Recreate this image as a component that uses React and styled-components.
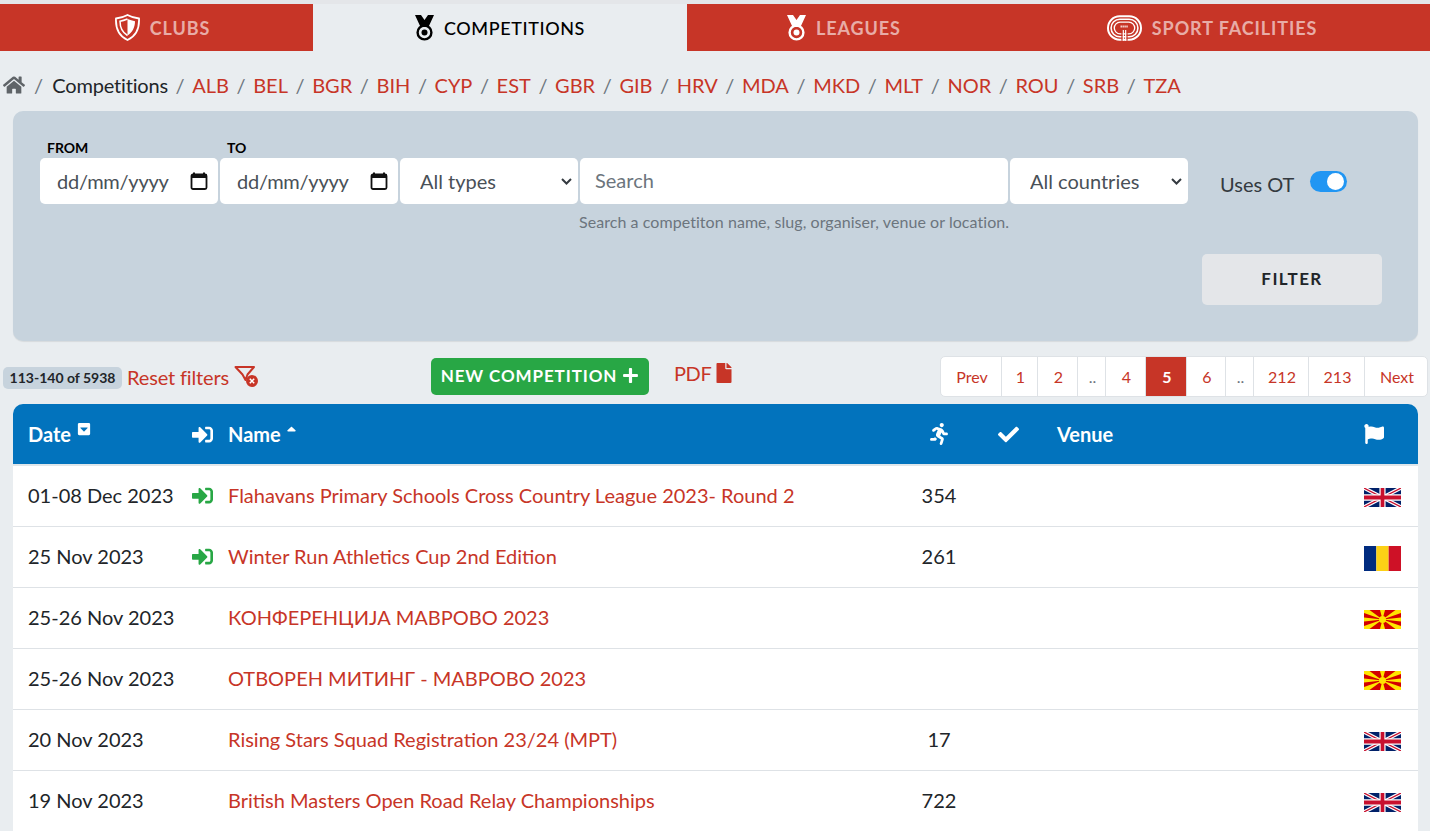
import React from "react";
import styled, { createGlobalStyle } from "styled-components";
import {
  FaHome,
  FaSignInAlt,
  FaRunning,
  FaCheck,
  FaFlag,
  FaFile,
  FaPlus,
  FaCaretSquareDown,
  FaSortUp,
} from "react-icons/fa";

const RED = "#c73527";

const GlobalStyle = createGlobalStyle`
  * { box-sizing: border-box; }
  html, body { margin: 0; padding: 0; }
  body {
    background: #e9edf0;
    font-family: "Lato", "Open Sans", sans-serif;
    color: #212529;
    height: 831px;
    overflow: hidden;
  }
`;

const tabs = [
  { label: "CLUBS", icon: "shield", width: 313, padLeft: 12 },
  { label: "COMPETITIONS", icon: "medal", width: 374, active: true },
  { label: "LEAGUES", icon: "medal", width: 314 },
  { label: "SPORT FACILITIES", icon: "track", width: 429, padRight: 7 },
];

const countries = ["ALB", "BEL", "BGR", "BIH", "CYP", "EST", "GBR", "GIB", "HRV", "MDA", "MKD", "MLT", "NOR", "ROU", "SRB", "TZA"];

const pages = [
  { label: "Prev", width: 61 },
  { label: "1", width: 36 },
  { label: "2", width: 40 },
  { label: "..", width: 28, muted: true },
  { label: "4", width: 40 },
  { label: "5", width: 41, active: true },
  { label: "6", width: 39 },
  { label: "..", width: 28, muted: true },
  { label: "212", width: 55 },
  { label: "213", width: 56 },
  { label: "Next", width: 62 },
];

const rows = [
  { date: "01-08 Dec 2023", entry: true, name: "Flahavans Primary Schools Cross Country League 2023- Round 2", count: "354", flag: "gb" },
  { date: "25 Nov 2023", entry: true, name: "Winter Run Athletics Cup 2nd Edition", count: "261", flag: "ro" },
  { date: "25-26 Nov 2023", name: "КОНФЕРЕНЦИЈА МАВРОВО 2023", flag: "mk" },
  { date: "25-26 Nov 2023", name: "ОТВОРЕН МИТИНГ - МАВРОВО 2023", flag: "mk" },
  { date: "20 Nov 2023", name: "Rising Stars Squad Registration 23/24 (MPT)", count: "17", flag: "gb" },
  { date: "19 Nov 2023", name: "British Masters Open Road Relay Championships", count: "722", flag: "gb" },
];

function ShieldIcon() {
  return (
    <svg width="25" height="27" viewBox="0 0 25 27">
      <path d="M12.5 1 C16 3 20 4 24 4.5 C24.5 14 21 22 12.5 26 C4 22 0.5 14 1 4.5 C5 4 9 3 12.5 1 Z" fill="none" stroke="#fff" strokeWidth="1.8" />
      <path d="M12.5 5 C10 6 7.5 6.8 5 7.2 C5 13 7.5 18.5 12.5 21.5" fill="none" stroke="#fff" strokeWidth="1.5" />
      <path d="M12.5 5 C15 6 17.5 6.8 20 7.2 C20 13 17.5 18.5 12.5 21.5 Z" fill="#fff" />
    </svg>
  );
}

function MedalIcon({ color }) {
  return (
    <svg width="19" height="26" viewBox="0 0 19 26">
      <path d="M0 0 H6 L9.5 5 L13 0 H19 L13.5 12 H5.5 Z" fill={color} />
      <circle cx="9.5" cy="17.5" r="6.9" fill="none" stroke={color} strokeWidth="2.4" />
      <circle cx="9.5" cy="17.5" r="3" fill={color} />
    </svg>
  );
}

function TrackIcon() {
  return (
    <svg width="35" height="26" viewBox="0 0 36 26" fill="none" stroke="#fff">
      <rect x="1" y="1" width="34" height="24" rx="12" strokeWidth="2" />
      <rect x="4.2" y="4" width="27.6" height="18" rx="9" strokeWidth="1.6" />
      <rect x="7.5" y="7" width="21" height="12" rx="6" strokeWidth="1.4" />
      <path d="M14 11.5 H22" strokeWidth="2" strokeDasharray="1.2 0.8" />
      <path d="M13 15.5 H23" stroke="#c73527" strokeWidth="3" />
      <path d="M15.5 15 V26 M20.5 15 V26" stroke="#c73527" strokeWidth="1.4" />
      <path d="M16.8 15 V26 M19.2 15 V26" strokeWidth="1.2" />
    </svg>
  );
}

function FilterResetIcon() {
  return (
    <svg width="25" height="23" viewBox="0 0 25 23">
      <path d="M1.5 2 H20 L13.5 9.5 L11.5 15 L8.5 9.5 Z" fill="none" stroke={RED} strokeWidth="2" strokeLinejoin="round" />
      <circle cx="18" cy="16" r="6" fill={RED} />
      <path d="M15.8 13.8 L20.2 18.2 M20.2 13.8 L15.8 18.2" stroke="#fff" strokeWidth="1.5" />
    </svg>
  );
}

function CalendarIcon() {
  return (
    <svg width="18" height="18" viewBox="0 0 18 18">
      <path d="M4 0.5 V3 M14 0.5 V3" stroke="#111" strokeWidth="2" />
      <rect x="1.5" y="2.5" width="15" height="14.5" rx="1.5" fill="none" stroke="#111" strokeWidth="1.8" />
      <rect x="1.5" y="2.5" width="15" height="3.5" fill="#111" />
    </svg>
  );
}

function Flag({ code }) {
  if (code === "ro") {
    return (
      <svg width="37" height="25" viewBox="0 0 3 2" preserveAspectRatio="none">
        <rect width="1" height="2" fill="#002b7f" />
        <rect x="1" width="1" height="2" fill="#fcd116" />
        <rect x="2" width="1" height="2" fill="#ce1126" />
      </svg>
    );
  }
  if (code === "mk") {
    return (
      <svg width="37" height="19" viewBox="0 0 74 38">
        <rect width="74" height="38" fill="#d20000" />
        <g fill="#ffe600">
          <polygon points="0,0 11,0 37,19 0,6" />
          <polygon points="74,0 63,0 37,19 74,6" />
          <polygon points="0,38 11,38 37,19 0,32" />
          <polygon points="74,38 63,38 37,19 74,32" />
          <polygon points="32,0 42,0 37,19" />
          <polygon points="32,38 42,38 37,19" />
          <polygon points="0,15 0,23 37,19" />
          <polygon points="74,15 74,23 37,19" />
          <circle cx="37" cy="19" r="7" />
        </g>
      </svg>
    );
  }
  return (
    <svg width="37" height="19" viewBox="0 0 60 30" preserveAspectRatio="none">
      <rect width="60" height="30" fill="#012169" />
      <path d="M0 0 L60 30 M60 0 L0 30" stroke="#fff" strokeWidth="6" />
      <path d="M0 0 L60 30 M60 0 L0 30" stroke="#c8102e" strokeWidth="2" />
      <path d="M30 0 V30 M0 15 H60" stroke="#fff" strokeWidth="10" />
      <path d="M30 0 V30 M0 15 H60" stroke="#c8102e" strokeWidth="6" />
    </svg>
  );
}

export default function App() {
  return (
    <>
      <GlobalStyle />
      <Page>
        <TabBar>
          {tabs.map((tab) => (
            <Tab key={tab.label} $active={tab.active} $width={tab.width} $padLeft={tab.padLeft} $padRight={tab.padRight}>
              {tab.icon === "shield" && <ShieldIcon />}
              {tab.icon === "medal" && <MedalIcon color={tab.active ? "#000" : "#fff"} />}
              {tab.icon === "track" && <TrackIcon />}
              <TabLabel $active={tab.active}>{tab.label}</TabLabel>
            </Tab>
          ))}
        </TabBar>

        <Breadcrumbs>
          <FaHome size={22} color="#5f6468" />
          <Slash $first>/</Slash>
          <Current>Competitions</Current>
          {countries.map((c) => (
            <React.Fragment key={c}>
              <Slash>/</Slash>
              <Crumb href="#">{c}</Crumb>
            </React.Fragment>
          ))}
        </Breadcrumbs>

        <FilterPanel>
          <FilterRow>
            <DateField>
              <FieldLabel>FROM</FieldLabel>
              <DateBox>
                <span>dd/mm/yyyy</span>
                <CalendarIcon />
              </DateBox>
            </DateField>
            <DateField>
              <FieldLabel>TO</FieldLabel>
              <DateBox>
                <span>dd/mm/yyyy</span>
                <CalendarIcon />
              </DateBox>
            </DateField>
            <Select $width={178}>
              <option>All types</option>
            </Select>
            <SearchColumn>
              <SearchInput placeholder="Search" />
              <Hint>Search a competiton name, slug, organiser, venue or location.</Hint>
            </SearchColumn>
            <Select $width={178}>
              <option>All countries</option>
            </Select>
            <ToggleRow>
              <span>Uses OT</span>
              <Toggle />
            </ToggleRow>
          </FilterRow>
          <FilterActions>
            <FilterButton>FILTER</FilterButton>
          </FilterActions>
        </FilterPanel>

        <Toolbar>
          <ToolbarLeft>
            <CountBadge>113-140 of 5938</CountBadge>
            <ResetLink href="#">
              Reset filters
              <FilterResetIcon />
            </ResetLink>
          </ToolbarLeft>
          <NewButton>
            NEW COMPETITION
            <FaPlus size={17} />
          </NewButton>
          <PdfLink href="#">
            PDF
            <FaFile size={20} />
          </PdfLink>
          <Pagination>
            {pages.map((p, i) => (
              <PageItem key={i} $width={p.width} $active={p.active} $muted={p.muted}>
                {p.label}
              </PageItem>
            ))}
          </Pagination>
        </Toolbar>

        <Table>
          <HeadRow>
            <DateCol>
              Date
              <FaCaretSquareDown size={14} style={{ marginLeft: 6, verticalAlign: 6 }} />
            </DateCol>
            <EntryCol>
              <FaSignInAlt size={21} />
            </EntryCol>
            <NameCol>
              Name
              <FaSortUp size={15} style={{ marginLeft: 3, verticalAlign: 2 }} />
            </NameCol>
            <CountCol>
              <FaRunning size={22} />
            </CountCol>
            <CheckCol>
              <FaCheck size={21} />
            </CheckCol>
            <VenueCol>Venue</VenueCol>
            <FlagCol>
              <FaFlag size={20} />
            </FlagCol>
          </HeadRow>
          {rows.map((row) => (
            <BodyRow key={row.name}>
              <DateCol>{row.date}</DateCol>
              <EntryCol>{row.entry && <FaSignInAlt size={21} color="#28a745" />}</EntryCol>
              <NameCol>
                <NameLink href="#">{row.name}</NameLink>
              </NameCol>
              <CountCol>{row.count}</CountCol>
              <CheckCol />
              <VenueCol />
              <FlagCol $lower>
                <Flag code={row.flag} />
              </FlagCol>
            </BodyRow>
          ))}
        </Table>
      </Page>
    </>
  );
}

const Page = styled.div`
  padding-top: 4px;
  width: 1430px;
  height: 831px;
  overflow: hidden;
  background: linear-gradient(#e4e6e9 4px, #e9edf0 4px);
`;

const TabBar = styled.nav`
  display: flex;
  height: 47px;
`;

const Tab = styled.a`
  flex: 0 0 ${(p) => p.$width}px;
  display: flex;
  align-items: center;
  justify-content: center;
  gap: 10px;
  padding: 0 ${(p) => p.$padRight || 0}px 0 ${(p) => p.$padLeft || 0}px;
  background: ${(p) => (p.$active ? "#e9edf0" : RED)};
`;

const TabLabel = styled.span`
  font-size: 18px;
  letter-spacing: ${(p) => (p.$active ? "0.6px" : "0.9px")};
  font-weight: ${(p) => (p.$active ? 500 : 700)};
  color: ${(p) => (p.$active ? "#000" : "rgba(255, 255, 255, 0.6)")};
`;

const Breadcrumbs = styled.div`
  display: flex;
  align-items: center;
  height: 36px;
  margin-top: 16px;
  padding-left: 3px;
  font-size: 20px;
  gap: 6.6px;
`;

const Slash = styled.span`
  color: #6c757d;
  padding: 0 1px;
  margin: 0 ${(p) => (p.$first ? "1.5px" : "0")};
`;

const Current = styled.span`
  color: #212529;
  letter-spacing: -0.17px;
`;

const Crumb = styled.a`
  color: ${RED};
  text-decoration: none;
`;

const FilterPanel = styled.section`
  margin: 8px 12px 0 13px;
  height: 230px;
  background: #c7d3dd;
  border-radius: 10px;
  padding: 27px 36px 0 27px;
  box-shadow: 0 1px 1px rgba(0, 0, 0, 0.08);
`;

const FilterRow = styled.div`
  display: flex;
  align-items: flex-start;
  gap: 2px;
  height: 116px;
`;

const DateField = styled.div`
  width: 178px;
`;

const FieldLabel = styled.label`
  display: block;
  height: 20px;
  padding-left: 7px;
  font-size: 14px;
  line-height: 20px;
  font-weight: 700;
  color: #000;
`;

const DateBox = styled.div`
  height: 46px;
  display: flex;
  align-items: center;
  justify-content: space-between;
  padding: 0 10px 0 17px;
  background: #fff;
  border-radius: 5px;
  font-size: 20px;
  letter-spacing: -0.25px;
  color: #495057;
`;

const Select = styled.select`
  width: ${(p) => p.$width}px;
  height: 46px;
  margin-top: 20px;
  padding: 0 0 0 20px;
  appearance: none;
  background-color: #fff;
  background-image: url("data:image/svg+xml,%3Csvg xmlns='http://www.w3.org/2000/svg' width='11' height='7' viewBox='0 0 11 7'%3E%3Cpath d='M1 1l4.5 4.5L10 1' fill='none' stroke='%23343a40' stroke-width='2'/%3E%3C/svg%3E");
  background-repeat: no-repeat;
  background-position: right 6px center;
  border: none;
  border-radius: 5px;
  font-family: inherit;
  font-size: 20px;
  color: #495057;
`;

const SearchColumn = styled.div`
  width: 428px;
  margin-top: 20px;
`;

const SearchInput = styled.input`
  display: block;
  width: 100%;
  height: 46px;
  padding: 0 15px 2px;
  background: #fff;
  border: none;
  border-radius: 5px;
  font-family: inherit;
  font-size: 20px;
  &::placeholder {
    color: #6c757d;
    opacity: 1;
  }
`;

const Hint = styled.div`
  margin-top: 8px;
  margin-left: -1px;
  font-size: 16px;
  letter-spacing: 0.06px;
  line-height: 20px;
  color: #6c757d;
  white-space: nowrap;
`;

const ToggleRow = styled.div`
  display: flex;
  align-items: center;
  gap: 16px;
  margin: 20px 0 0 30px;
  height: 52px;
  font-size: 20px;
  color: #343a40;
`;

const Toggle = styled.span`
  position: relative;
  display: block;
  width: 37px;
  height: 21px;
  margin-top: -5px;
  border-radius: 11px;
  background: #2196f3;
  &::after {
    content: "";
    position: absolute;
    right: 3px;
    top: 2px;
    width: 17px;
    height: 17px;
    border-radius: 50%;
    background: #fff;
  }
`;

const FilterActions = styled.div`
  display: flex;
  justify-content: flex-end;
`;

const FilterButton = styled.button`
  width: 180px;
  height: 51px;
  padding: 0 0 2px;
  background: #e4e6e9;
  border: none;
  border-radius: 5px;
  font-family: inherit;
  font-size: 17px;
  font-weight: 700;
  letter-spacing: 1.4px;
  color: #212529;
`;

const Toolbar = styled.div`
  display: flex;
  align-items: center;
  height: 41px;
  margin-top: 15px;
  padding: 0 2px 0 3px;
`;

const ToolbarLeft = styled.div`
  display: flex;
  align-items: center;
  gap: 5px;
  width: 428px;
  padding-top: 3px;
`;

const CountBadge = styled.span`
  display: inline-block;
  width: 119px;
  height: 22px;
  line-height: 22px;
  text-align: center;
  background: #c7d3dd;
  border-radius: 5px;
  font-size: 14px;
  font-weight: 700;
  color: #212529;
  white-space: nowrap;
`;

const ResetLink = styled.a`
  display: inline-flex;
  align-items: center;
  gap: 5px;
  margin-top: -3px;
  color: ${RED};
  font-size: 20px;
  letter-spacing: -0.15px;
  text-decoration: none;
`;

const NewButton = styled.button`
  display: inline-flex;
  align-items: center;
  justify-content: center;
  gap: 5px;
  width: 218px;
  height: 37px;
  padding: 0 0 2px;
  background: #28a745;
  border: none;
  border-radius: 5px;
  font-family: inherit;
  font-size: 17px;
  font-weight: 700;
  letter-spacing: 0.9px;
  color: #fff;
  white-space: nowrap;
`;

const PdfLink = styled.a`
  display: inline-flex;
  align-items: center;
  gap: 3px;
  margin-left: 25px;
  margin-top: -7px;
  font-size: 20px;
  letter-spacing: -0.4px;
  color: ${RED};
  text-decoration: none;
`;

const Pagination = styled.div`
  display: flex;
  margin-left: auto;
  height: 41px;
  background: #fff;
  border: 1px solid #dee2e6;
  border-radius: 5px;
  overflow: hidden;
`;

const PageItem = styled.span`
  flex: 0 0 ${(p) => p.$width}px;
  display: flex;
  align-items: center;
  justify-content: center;
  padding-left: 2px;
  border-right: 1px solid #dee2e6;
  font-size: 16px;
  font-weight: ${(p) => (p.$active ? 700 : 400)};
  color: ${(p) => (p.$active ? "#fff" : p.$muted ? "#6c757d" : RED)};
  background: ${(p) => (p.$active ? RED : "transparent")};
  &:last-child {
    border-right: none;
  }
`;

const Table = styled.div`
  margin: 7px 12px 0 13px;
`;

const HeadRow = styled.div`
  display: flex;
  align-items: center;
  height: 62px;
  background: #0273bd;
  border-bottom: 2px solid #dfe6ea;
  border-radius: 10px 10px 0 0;
  color: #fff;
  font-size: 20px;
  font-weight: 700;
`;

const BodyRow = styled.div`
  display: flex;
  align-items: center;
  height: 61px;
  padding-bottom: 2px;
  background: #fff;
  border-bottom: 1px solid #dee2e6;
  font-size: 20px;
  color: #212529;
`;

const DateCol = styled.div`
  flex: 0 0 179px;
  padding-left: 15px;
  white-space: nowrap;
`;

const EntryCol = styled.div`
  flex: 0 0 36px;
  display: flex;
  align-items: center;
`;

const NameCol = styled.div`
  flex: 0 0 676px;
  white-space: nowrap;
`;

const NameLink = styled.a`
  color: ${RED};
  text-decoration: none;
`;

const CountCol = styled.div`
  flex: 0 0 70px;
  display: flex;
  justify-content: center;
`;

const CheckCol = styled.div`
  flex: 0 0 68px;
  display: flex;
  justify-content: center;
`;

const VenueCol = styled.div`
  flex: 1 1 auto;
  padding-left: 15px;
`;

const FlagCol = styled.div`
  flex: 0 0 54px;
  padding-top: ${(p) => (p.$lower ? "4px" : "0")};
  display: flex;
  align-items: center;
`;
